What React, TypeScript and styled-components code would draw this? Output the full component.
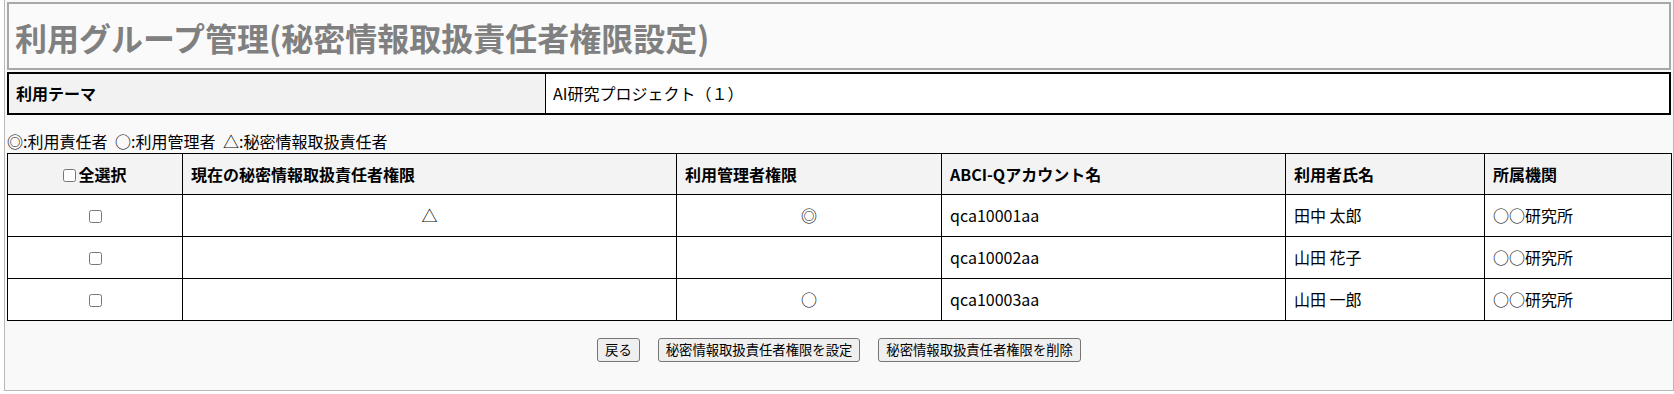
import React from "react";
import styled, { createGlobalStyle } from "styled-components";

const GlobalStyle = createGlobalStyle`
  html, body { margin: 0; padding: 0; background: #fff; }
  body {
    font-family: "Noto Sans CJK JP", "Noto Sans", sans-serif;
    color: #000;
  }
`;

const Page = styled.div`
  box-sizing: border-box;
  width: 1670px;
  margin: 0 0 3px 4px;
  border: 1px solid #b8b8b8;
  border-top: none;
  background: #f9f9f9;
  padding: 2px 2px 28px;
`;

const TitleBox = styled.div`
  border: 2px solid #a8a8a8;
  background: #fafafa;
  padding: 10px 6px 8px;
`;

const Title = styled.h1`
  margin: 0;
  font-size: 32px;
  line-height: 46px;
  font-weight: 700;
  color: #808080;
`;

const InfoTable = styled.table`
  width: 100%;
  margin-top: 2px;
  border: 2px solid #000;
  border-spacing: 0;
  table-layout: fixed;
  font-size: 16px;
`;

const InfoLabel = styled.th`
  width: 522px;
  background: #f2f2f2;
  text-align: left;
  font-weight: 700;
  padding: 8px 7px;
  line-height: 23px;
`;

const InfoValue = styled.td`
  background: #fff;
  border-left: 1px solid #000;
  padding: 8px 7px;
  line-height: 23px;
`;

const Legend = styled.div`
  margin-top: 15px;
  font-size: 16px;
  line-height: 23px;
  word-spacing: 4px;
`;

const Grid = styled.table`
  width: 100%;
  border-collapse: collapse;
  table-layout: fixed;
  font-size: 16px;
  background: #fff;
`;

const HeadCell = styled.th<{ $center?: boolean }>`
  border: 1px solid #000;
  background: #f3f3f3;
  font-weight: 700;
  text-align: ${(p) => (p.$center ? "center" : "left")};
  padding: 9px 8px 8px;
  line-height: 23px;
  white-space: nowrap;
`;

const Cell = styled.td<{ $center?: boolean }>`
  border: 1px solid #000;
  text-align: ${(p) => (p.$center ? "center" : "left")};
  padding: 9px 8px 9px;
  line-height: 23px;
  white-space: nowrap;
`;

const Check = styled.input.attrs({ type: "checkbox" })<{ $tight?: boolean }>`
  width: 13px;
  height: 13px;
  margin: ${(p) => (p.$tight ? "0 2px 0 0" : "0")};
  vertical-align: -1px;
`;

const ButtonRow = styled.div`
  display: flex;
  justify-content: center;
  gap: 18px;
  margin-top: 17px;
`;

const Button = styled.button`
  box-sizing: border-box;
  height: 24px;
  font-family: "Noto Sans CJK JP", "Noto Sans", sans-serif;
  font-size: 13.333px;
  line-height: 20px;
  padding: 1px 7px;
  border: 1px solid #767676;
  border-radius: 3px;
  background: #efefef;
  color: #000;
`;

const widths = [175, 494, 265, 344, 199, 187];

const rows = [
  { sec: "△", admin: "◎", account: "qca10001aa", name: "田中 太郎", org: "○○研究所" },
  { sec: "", admin: "", account: "qca10002aa", name: "山田 花子", org: "○○研究所" },
  { sec: "", admin: "○", account: "qca10003aa", name: "山田 一郎", org: "○○研究所" },
];

export default function App() {
  return (
    <>
      <GlobalStyle />
      <Page>
        <TitleBox>
          <Title>利用グループ管理(秘密情報取扱責任者権限設定)</Title>
        </TitleBox>
        <InfoTable>
          <tbody>
            <tr>
              <InfoLabel>利用テーマ</InfoLabel>
              <InfoValue>AI研究プロジェクト（１）</InfoValue>
            </tr>
          </tbody>
        </InfoTable>
        <Legend>◎:利用責任者 ○:利用管理者 △:秘密情報取扱責任者</Legend>
        <Grid>
          <colgroup>
            {widths.map((w, i) => (
              <col key={i} style={{ width: w }} />
            ))}
          </colgroup>
          <thead>
            <tr>
              <HeadCell $center>
                <Check $tight />
                全選択
              </HeadCell>
              <HeadCell>現在の秘密情報取扱責任者権限</HeadCell>
              <HeadCell>利用管理者権限</HeadCell>
              <HeadCell>ABCI-Qアカウント名</HeadCell>
              <HeadCell>利用者氏名</HeadCell>
              <HeadCell>所属機関</HeadCell>
            </tr>
          </thead>
          <tbody>
            {rows.map((r) => (
              <tr key={r.account}>
                <Cell $center>
                  <Check />
                </Cell>
                <Cell $center>{r.sec}</Cell>
                <Cell $center>{r.admin}</Cell>
                <Cell>{r.account}</Cell>
                <Cell>{r.name}</Cell>
                <Cell>{r.org}</Cell>
              </tr>
            ))}
          </tbody>
        </Grid>
        <ButtonRow>
          <Button>戻る</Button>
          <Button>秘密情報取扱責任者権限を設定</Button>
          <Button>秘密情報取扱責任者権限を削除</Button>
        </ButtonRow>
      </Page>
    </>
  );
}
